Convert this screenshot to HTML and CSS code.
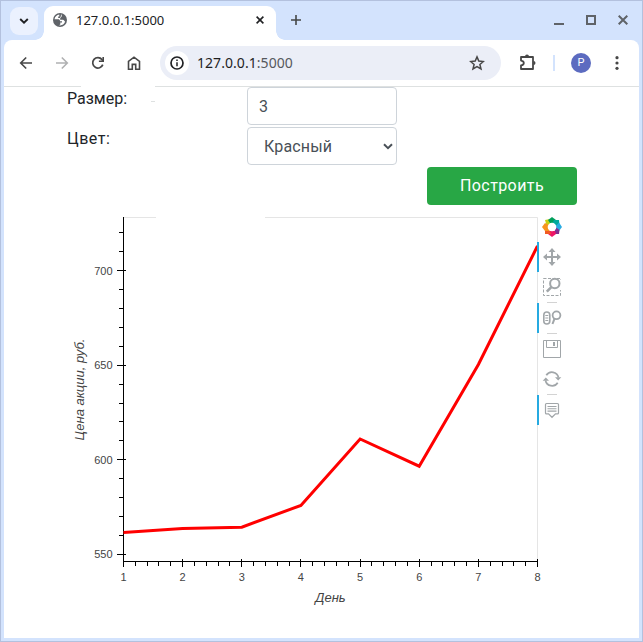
FILE: index.html
```html
<!DOCTYPE html>
<html lang="ru">
<head>
<meta charset="utf-8">
<title>127.0.0.1:5000</title>
<link rel="stylesheet" href="styles.css">
</head>
<body>
<div class="window">
  <header class="tabstrip">
    <div class="tab-search"><svg width="10" height="6" viewBox="0 0 10 6"><path d="M1.2 1 5 4.7 8.8 1" fill="none" stroke="#202124" stroke-width="1.9"/></svg></div>
    <div class="tab">
      <svg class="globe" width="14" height="14" viewBox="0 0 14 14"><circle cx="7" cy="7" r="7" fill="#5f6368"/><path d="M6.3 1.6C4 2 2 3.500 1.500 6.200L5 6.300c1.300 0 2 .6 2 1.900h2v1.300H7.300v1.900L6 12.300c2.600.5 5.200-.8 6.100-3.500L11.500 8c-.6-.8-1-1.300-2.200-1.300H7.200V4.900h-2V3.600h1.100z" fill="#fff"/><path d="M8.400 1.600v1.500c0 .8-.5 1.300-1.400 1.400" stroke="#fff" fill="none" stroke-width=".8"/></svg>
      <span class="tab-title">127.0.0.1:5000</span>
      <svg class="tab-close" width="8" height="8" viewBox="0 0 8 8"><path d="M.6.6 7.400 7.400M7.400.6.6 7.400" stroke="#202124" stroke-width="1.6"/></svg>
    </div>
    <svg class="new-tab" width="10" height="10" viewBox="0 0 10 10"><path d="M5 0v10M0 5h10" stroke="#454746" stroke-width="1.6"/></svg>
    <div class="controls">
      <svg width="10" height="10" viewBox="0 0 10 10"><path d="M0 9h10" stroke="#5f6368" stroke-width="2"/></svg>
      <svg width="10" height="10" viewBox="0 0 10 10"><path d="M1 1h8v8H1z" fill="none" stroke="#5f6368" stroke-width="2"/></svg>
      <svg width="10" height="10" viewBox="0 0 10 10"><path d="m.7.7 8.600 8.600M9.300.7.7 9.300" stroke="#5f6368" stroke-width="2"/></svg>
    </div>
  </header>
  <main class="panel">
    <nav class="toolbar">
      <svg width="14" height="14" viewBox="0 0 14 14"><path d="M13 7H2M7.200 1.500 1.700 7l5.500 5.500" fill="none" stroke="#474747" stroke-width="1.6"/></svg>
      <svg width="14" height="14" viewBox="0 0 14 14"><path d="M1 7h11M6.800 1.500 12.300 7l-5.500 5.500" fill="none" stroke="#b0b1b2" stroke-width="1.6"/></svg>
      <svg width="14" height="14" viewBox="0 0 14 14"><path d="M11.800 8.600A5.200 5.200 0 1 1 11 3.600l1 1.100" fill="none" stroke="#474747" stroke-width="1.700"/><path d="M12.200 1v4.300H7.900" fill="none" stroke="#474747" stroke-width="1.600"/></svg>
      <svg width="14" height="14" viewBox="0 0 14 14"><path d="M1.500 5.400 7 1.200l5.500 4.200v7.800H8.700V8.400H5.300v4.800H1.500z" fill="none" stroke="#474747" stroke-width="1.600"/></svg>
      <div class="omnibox">
        <span class="site-info"><svg width="14" height="14" viewBox="0 0 14 14"><circle cx="7" cy="7" r="6" fill="none" stroke="#202124" stroke-width="1.700"/><path d="M7 6.300v4M7 3.500v1.600" stroke="#202124" stroke-width="1.500"/></svg></span>
        <span class="url">127.0.0.1<span>:5000</span></span>
        <svg width="16" height="16" viewBox="0 0 16 16"><path d="m8 1.900 1.800 4.200 4.600.4-3.500 3 1.100 4.500L8 11.600 4 14l1.100-4.500-3.500-3 4.600-.4z" fill="none" stroke="#474747" stroke-width="1.500"/></svg>
      </div>
      <svg class="puzzle" width="18" height="18" viewBox="0 0 18 18"><path d="M2 3h12v12H2v-3.600c2-.3 2.800-1.200 2.800-2.400S4 6.900 2 6.600z" fill="none" stroke="#474747" stroke-width="1.800" stroke-linejoin="round"/><path d="M6 2.500a2 2 0 0 1 4 0zM14.500 7a2 2 0 0 1 0 4z" fill="#474747"/></svg>
      <span class="divider"></span>
      <span class="avatar">P</span>
      <svg class="more" width="4" height="14" viewBox="0 0 4 14"><g fill="#474747"><circle cx="2" cy="1.700" r="1.600"/><circle cx="2" cy="7" r="1.600"/><circle cx="2" cy="12.300" r="1.600"/></g></svg>
    </nav>
    <div class="rule"><i></i><i></i></div>
    <form class="form">
      <label for="size">Размер:</label><input id="size" value="3"><i class="dash"></i>
      <label class="wide" for="color">Цвет:</label>
      <div class="select" id="color"><span>Красный</span><svg width="10" height="7" viewBox="0 0 10 7"><path d="m1 1.200 4 3.900 4-3.900" fill="none" stroke="#495057" stroke-width="2"/></svg></div>
      <button type="button">Построить</button>
    </form>
    <section class="plot">
      <svg class="chart" width="477" height="410" viewBox="60 210 477 410">
        <path d="M123 217.500h33M265 217.500h272.500v344" fill="none" stroke="#e5e5e5"/>
        <path d="M123.500 217v344.500H538" fill="none" stroke="#000"/>
        <path stroke="#000" d="M119 232.500h4M119 251.500h4M117 270.500h9M119 289.500h4M119 308.500h4M119 327.500h4M119 346.500h4M117 365.500h9M119 384.500h4M119 403.500h4M119 421.500h4M119 440.500h4M117 459.500h9M119 478.500h4M119 497.500h4M119 516.500h4M119 535.500h4M117 554.500h9"/>
        <path stroke="#000" d="M123.500 559v8M135.500 562v4M147.500 562v4M158.500 562v4M170.500 562v4M182.500 559v8M194.500 562v4M206.500 562v4M218.500 562v4M229.500 562v4M241.500 559v8M253.500 562v4M265.500 562v4M277.500 562v4M289.500 562v4M300.500 559v8M312.500 562v4M324.500 562v4M336.500 562v4M348.500 562v4M360.500 559v8M371.500 562v4M383.500 562v4M395.500 562v4M407.500 562v4M419.500 559v8M431.500 562v4M442.500 562v4M454.500 562v4M466.500 562v4M478.500 559v8M490.500 562v4M502.500 562v4M513.500 562v4M525.500 562v4M537.500 559v8"/>
        <clipPath id="area"><path d="M123 217h415v345H123z"/></clipPath>
        <path clip-path="url(#area)" d="M123.500 532.500 182.600 528.500 241.800 527.200 300.900 505.400 360.100 439 419.200 466.200 478.400 364.500 537.500 246" fill="none" stroke="red" stroke-width="3"/>
        <g class="ticks end"><text x="112.500" y="274.500">700</text><text x="112.500" y="369">650</text><text x="112.500" y="463.500">600</text><text x="112.500" y="558">550</text></g>
        <g class="ticks mid"><text x="123.500" y="581">1</text><text x="182.600" y="581">2</text><text x="241.800" y="581">3</text><text x="300.900" y="581">4</text><text x="360.100" y="581">5</text><text x="419.200" y="581">6</text><text x="478.400" y="581">7</text><text x="537.500" y="581">8</text></g>
        <text class="axis" x="330.500" y="602">День</text>
        <text class="axis" transform="translate(84 389.500) rotate(-90)">Цена акции, руб.</text>
      </svg>
      <aside class="tools">
        <div class="logo"><svg width="20" height="20" viewBox="0 0 20 20"><path d="m3 3 5-1 2 4-5 4z" fill="#c4cf12"/><path d="m6 3 4-3 4 3-2 4-4-1z" fill="#009f5b"/><path d="m12 3 5 0 .5 5-4 1-3-3z" fill="#00a99d"/><path d="m17 5.500 3 4.500-3 4-4-4z" fill="#29abe2"/><path d="m13.500 10 4 3-.5 4h-5z" fill="#812f91"/><path d="m7 14 6 0 1 3-4 3-4-3z" fill="#ed1566"/><path d="m3 11 4 1 2 5H3z" fill="#f15a24"/><path d="m0 10 3-4 4 2v6l-4 0z" fill="#f7931e"/><circle cx="10" cy="10" r="4.300" fill="#fff"/></svg></div>
        <div class="tool active"><svg width="20" height="20" viewBox="0 0 20 20"><path d="M10 3v14M3 10h14" stroke="#a1a6a9" stroke-width="2"/><path d="m10 1 3.500 4h-7zM10 19l3.500-4h-7zM1 10l4-3.500v7zM19 10l-4-3.500v7z" fill="#a1a6a9"/></svg></div>
        <div class="tool"><svg width="20" height="20" viewBox="0 0 20 20"><path d="M1.500 1.500h17v17h-17z" fill="none" stroke="#a1a6a9" stroke-dasharray="3 1.500"/><path d="M5 3h14v10l-8 2-7-1z" fill="#fff"/><circle cx="12.800" cy="6.500" r="4.700" fill="#fff" stroke="#a1a6a9" stroke-width="2"/><path d="m9.600 9.800-4.800 4.800" stroke="#a1a6a9" stroke-width="2.600"/></svg></div>
        <hr>
        <div class="tool active"><svg width="20" height="20" viewBox="0 0 20 20"><rect x="1.800" y="4" width="6" height="12" rx="3" fill="none" stroke="#a1a6a9" stroke-width="1.600"/><path d="M3.300 7.500h3M3.300 10h3M3.300 12.500h3" stroke="#a1a6a9" stroke-width="1"/><circle cx="14.500" cy="7.300" r="3.900" fill="none" stroke="#a1a6a9" stroke-width="1.800"/><path d="M12.600 10.300 10.500 16" stroke="#a1a6a9" stroke-width="2"/></svg></div>
        <hr>
        <div class="tool"><svg width="20" height="20" viewBox="0 0 20 20"><path d="M1.500 1.500h17v17h-17zM4.500 1.500v7h11v-7" fill="none" stroke="#a1a6a9"/><path d="M12 3v4" stroke="#a1a6a9" stroke-width="2"/></svg></div>
        <div class="tool"><svg width="20" height="20" viewBox="0 0 20 20"><path d="M4.300 6.300A6.700 6.700 0 0 1 16.500 8.500M15.700 13.700A6.700 6.700 0 0 1 3.500 11.500" fill="none" stroke="#a1a6a9" stroke-width="1.700"/><path d="M13 8.300H19.300L16.200 11.500zM.7 11.700h6.300L3.800 8.500z" fill="#a1a6a9"/></svg></div>
        <hr>
        <div class="tool active"><svg width="20" height="20" viewBox="0 0 20 20"><path d="M4.500 3.500h11q1 0 1 1v8.500q0 .9-1 .9h-2L10 17.300l-3.500-3.400h-2q-1 0-1-.9V4.500q0-1 1-1z" fill="none" stroke="#a1a6a9" stroke-width="1.200"/><path d="M5.500 6.500h9M5.500 8.800h9M5.500 11.100h9" stroke="#a1a6a9" stroke-width="1.100"/></svg></div>
      </aside>
    </section>
  </main>
</div>
</body>
</html>
```
FILE: styles.css
```css
* { box-sizing: border-box; }
body { margin: 0; font-family: Roboto, sans-serif; }
svg { display: block; flex: none; }

.window {
  width: 643px; height: 642px; overflow: hidden;
  border: 1px solid #b3c1de; background: #d3e3fd;
  padding: 0 3px 3px;
}
.tabstrip { height: 39px; display: flex; align-items: center; padding-left: 6px; }
.tab-search {
  width: 28px; height: 28px; border-radius: 9px; background: #ebf1fe;
  display: flex; align-items: center; justify-content: center;
}
.tab {
  position: relative; align-self: flex-end; width: 232px; height: 34px; margin-left: 6px;
  border-radius: 9px 9px 0 0; background: #fff;
  display: flex; align-items: center; padding: 0 12px 6px 9px;
}
.tab::before, .tab::after { content: ""; position: absolute; bottom: 0; width: 9px; height: 9px; }
.tab::before { left: -9px; background: radial-gradient(circle at 0 0, transparent 8.500px, #fff 9px); }
.tab::after { right: -9px; background: radial-gradient(circle at 100% 0, transparent 8.500px, #fff 9px); }
.tab-title { margin-left: 9px; font: 13px/16px "Noto Sans", sans-serif; color: #202124; }
.tab-close { margin-left: auto; }
.new-tab { margin: 0 0 1px 15px; }
.controls { display: flex; gap: 22px; margin: 0 11px 1px auto; }

.panel { height: 598px; background: #fff; border-radius: 8px 8px 0 0; }
.toolbar { height: 46px; display: flex; align-items: center; padding-left: 15px; gap: 22px; }
.omnibox {
  width: 341px; height: 34px; margin-left: -3px; border-radius: 17px; background: #ebeef7;
  display: flex; align-items: center; padding: 0 16px 0 5px;
}
.site-info {
  width: 24px; height: 24px; border-radius: 50%; background: #fff;
  display: flex; align-items: center; justify-content: center;
}
.url { margin: 0 auto 0 8px; font: 14px/20px "Noto Sans", sans-serif; letter-spacing: .05px; color: #1f1f1f; }
.url span { color: #55585d; }
.puzzle { margin-left: -4px; }
.divider { width: 2px; height: 16px; background: #d3e3fd; margin-left: -6px; }
.avatar {
  width: 20px; height: 20px; margin-left: -6px; border-radius: 50%; background: #5c6bc0;
  color: #fff; font-size: 11px; line-height: 20px; text-align: center;
}
.more { margin-left: 2px; }
.rule { height: 1px; display: grid; grid-template-columns: 77px 484px; column-gap: 74px; }
.rule i { background: #dee1e1; }

.form {
  position: relative; display: grid; grid-template-columns: 180px 180px 150px;
  grid-auto-rows: 38px; row-gap: 2px; padding-left: 63px;
  color: #212529; font-size: 16px; line-height: 24px;
}
.form label { grid-column: 1; }
.form .wide { letter-spacing: .5px; }
.dash { position: absolute; left: 147px; top: 14px; width: 4px; height: 1px; background: #dee1e1; }
.form input, .select {
  grid-column: 2; width: 150px; height: 38px; border: 1px solid #ced4da; border-radius: 4px;
  background: #fff; color: #495057; font: inherit; padding: 6px 11px;
}
.form input { outline: 0; }
.select {
  display: flex; align-items: center; justify-content: space-between;
  padding: 1px 3px 0 16px; letter-spacing: .15px;
}
.form button {
  grid-area: 3 / 3; border: 0; border-radius: 4px; background: #28a745; color: #fff;
  font: inherit; letter-spacing: .4px; padding: 0;
}

.plot { display: flex; padding: 5px 0 0 56px; }
.chart { overflow: visible; }
.tools { width: 30px; padding-top: 7px; }
.logo, .tool { padding-left: 5px; }
.logo { height: 25px; }
.tool { height: 30px; display: flex; align-items: center; padding-left: 3px; border-left: 2px solid transparent; }
.tool.active { border-left-color: #26aae1; }
.tools hr { width: 10px; height: 1px; margin: 0 0 0 10px; border: 0; background: #d3d3d3; }
.ticks { font: 11px "Liberation Sans", sans-serif; fill: #444; }
.end { text-anchor: end; }
.mid, .axis { text-anchor: middle; }
.axis { font: italic 13px "Liberation Sans", sans-serif; fill: #444; }
```
